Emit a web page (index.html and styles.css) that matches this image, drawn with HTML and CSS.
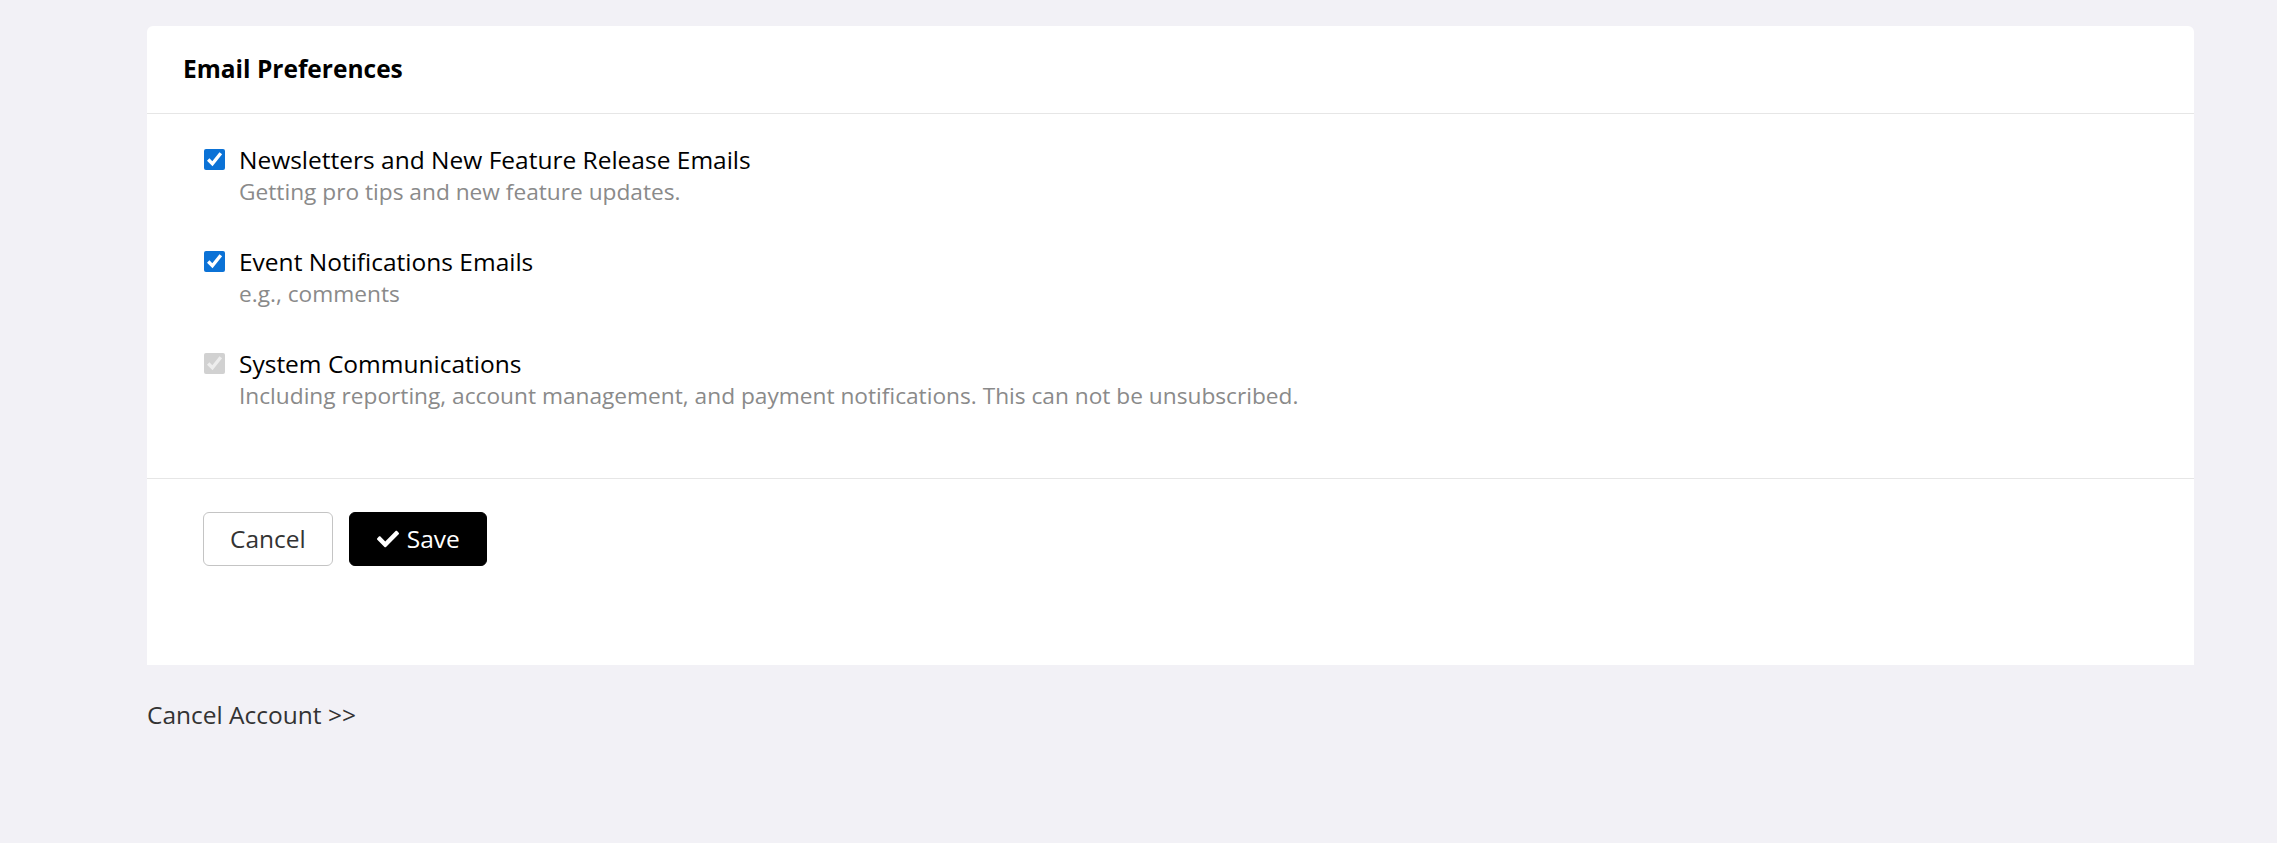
FILE: index.html
```html
<!DOCTYPE html>
<html lang="en">
<head>
    <meta charset="UTF-8">
    <meta name="viewport" content="width=device-width, initial-scale=1.0">
    <title>Email Preferences</title>
    <link rel="stylesheet" href="styles.css">
</head>
<body>

<div class="page">
    <div class="card">
        <div class="card-header">
            <h2>Email Preferences</h2>
        </div>

        <form class="card-body" id="prefsForm">
            <label class="pref">
                <input type="checkbox" name="newsletter" checked>
                <span class="pref-text">
                    <span class="pref-title">Newsletters and New Feature Release Emails</span>
                    <span class="pref-desc">Getting pro tips and new feature updates.</span>
                </span>
            </label>
            <label class="pref">
                <input type="checkbox" name="events" checked>
                <span class="pref-text">
                    <span class="pref-title">Event Notifications Emails</span>
                    <span class="pref-desc">e.g., comments</span>
                </span>
            </label>
            <label class="pref">
                <input type="checkbox" name="system" checked disabled>
                <span class="pref-text">
                    <span class="pref-title">System Communications</span>
                    <span class="pref-desc">Including reporting, account management, and payment notifications. This can not be unsubscribed.</span>
                </span>
            </label>
        </form>

        <div class="card-footer">
            <button type="button" class="btn btn-cancel">Cancel</button>
            <button type="submit" class="btn btn-save" form="prefsForm">
                <svg class="icon-check" viewBox="0 0 512 512" aria-hidden="true">
                    <path d="M173.9 439.4l-166.4-166.4c-10-10-10-26.2 0-36.2l36.2-36.2c10-10 26.2-10 36.2 0L192 312.7 432.1 72.6c10-10 26.2-10 36.2 0l36.2 36.2c10 10 10 26.2 0 36.2l-294.4 294.4c-10 10-26.2 10-36.2 0z"/>
                </svg>
                Save
            </button>
        </div>
    </div>

    <a href="#" class="cancel-account">Cancel Account &gt;&gt;</a>
</div>

</body>
</html>
```

FILE: styles.css
```css
body {
    font-family: "Open Sans", Arial, sans-serif;
    margin: 0;
    padding: 0;
    background-color: #f2f1f6;
    color: #000;
}

.page {
    width: 2047px;
    margin-left: 147px;
    padding-top: 26px;
}

.card {
    background-color: #fff;
    border-radius: 6px 6px 0 0;
}

.card-header {
    padding: 26px 36px 28px;
    border-bottom: 1px solid #e6e6e6;
}

.card-header h2 {
    margin: 0;
    font-size: 24.5px;
    line-height: 33px;
    font-weight: 700;
}

.card-body {
    padding: 30px 57px 28px;
}

.pref {
    display: flex;
    align-items: flex-start;
    gap: 14px;
    margin-bottom: 38px;
    line-height: 32px;
}

.pref input[type="checkbox"] {
    width: 21px;
    height: 21px;
    margin: 5px 0 0 0;
    flex-shrink: 0;
    accent-color: #0b72d6;
}

.pref-text {
    display: flex;
    flex-direction: column;
}

.pref-title {
    font-size: 24.5px;
    color: #000;
}

.pref-desc {
    font-size: 22.7px;
    color: #8a8a8a;
}

.card-footer {
    display: flex;
    gap: 16px;
    padding: 33px 56px 99px;
    border-top: 1px solid #e6e6e6;
}

.btn {
    display: flex;
    align-items: center;
    gap: 8px;
    height: 54px;
    padding: 0 26px;
    font-family: inherit;
    font-size: 24.5px;
    line-height: 32px;
    border-radius: 6px;
    cursor: pointer;
}

.btn-cancel {
    background-color: #fff;
    color: #333;
    border: 1px solid #c4c4c4;
}

.btn-save {
    background-color: #000;
    color: #fff;
    border: 1px solid #000;
    padding-left: 27px;
}

.icon-check {
    width: 22px;
    height: 22px;
    fill: #fff;
}

.cancel-account {
    display: inline-block;
    margin-top: 34px;
    font-size: 24.5px;
    line-height: 32px;
    color: #333;
    text-decoration: none;
}
```
